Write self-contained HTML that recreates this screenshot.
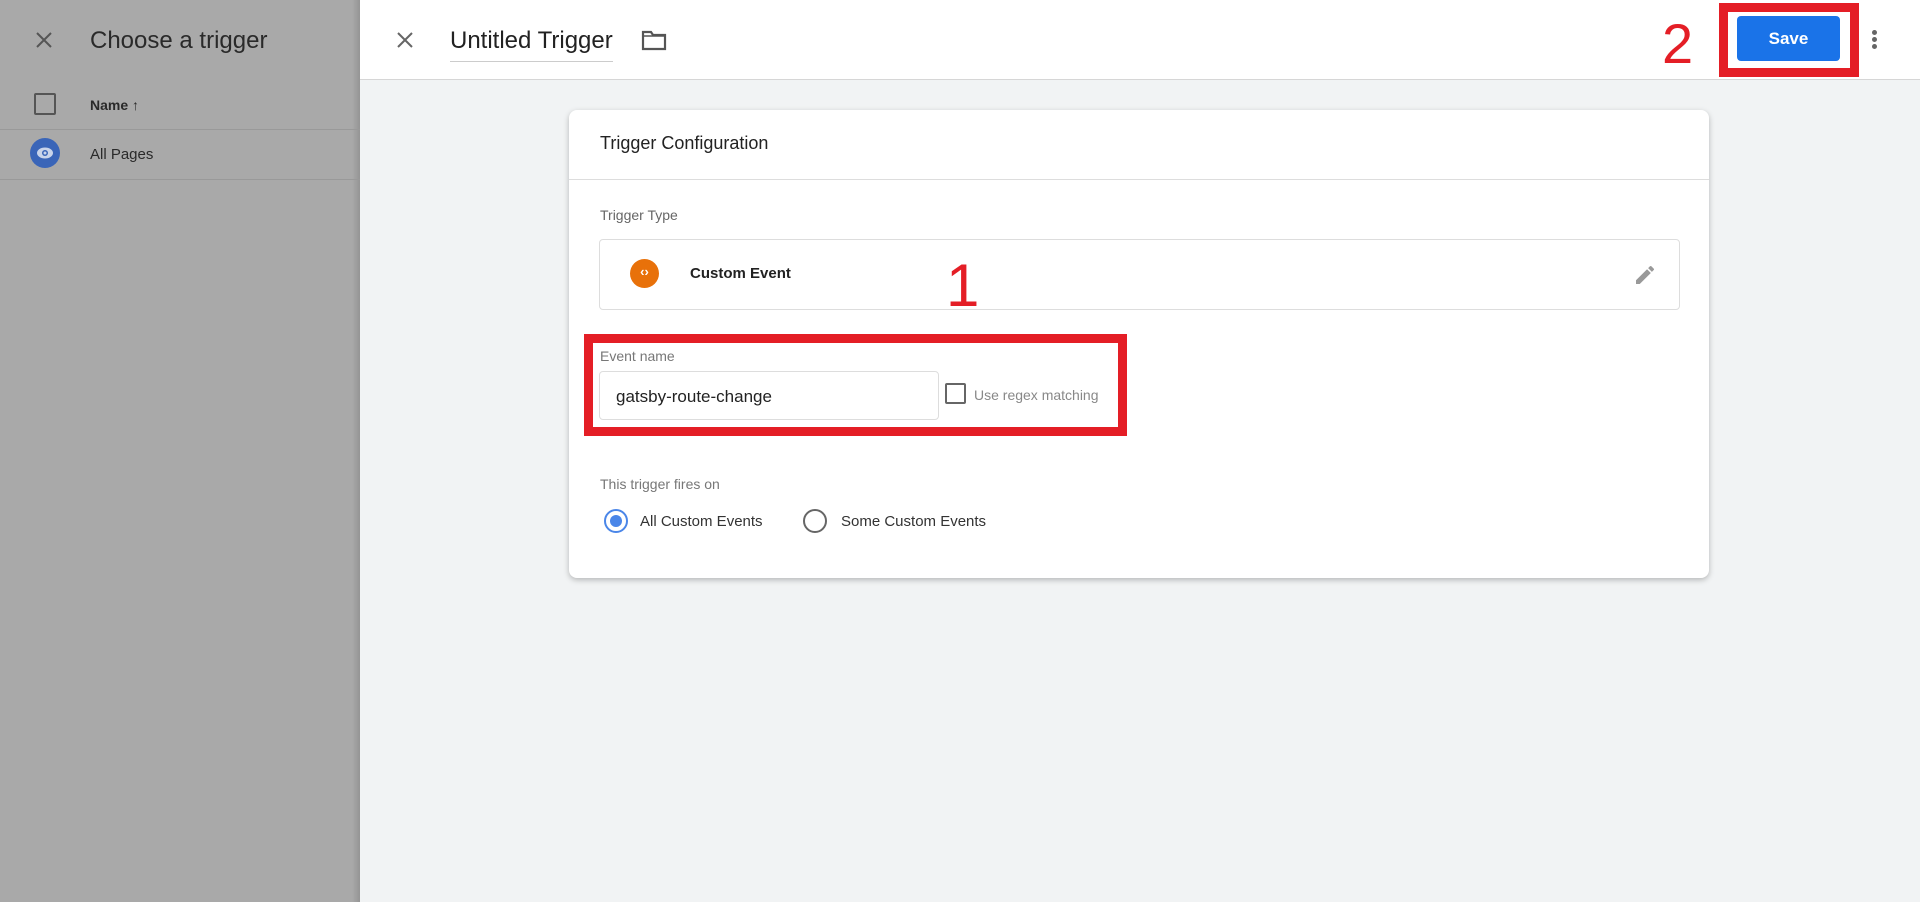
<!DOCTYPE html>
<html><head><style>
*{margin:0;padding:0;box-sizing:border-box}
body{width:1920px;height:902px;overflow:hidden;font-family:"Liberation Sans",sans-serif;background:#f1f3f4;position:relative}
.abs{position:absolute}
#left{left:0;top:0;width:360px;height:902px;background:#a9a9a9}
#hdr{left:360px;top:0;width:1560px;height:80px;background:#fff;border-bottom:1px solid #d6d6d6}
#shadow{left:352px;top:0;width:8px;height:902px;background:linear-gradient(to right,rgba(0,0,0,0),rgba(0,0,0,.12))}
.card{left:569px;top:110px;width:1140px;height:468px;background:#fff;border-radius:8px;box-shadow:0 2px 6px rgba(0,0,0,.25)}
.red{border:9px solid #e41e26}
</style></head><body>
<div id="left" class="abs"></div>
<div id="shadow" class="abs"></div>
<svg class="abs" style="left:34px;top:30px" width="20" height="20" viewBox="0 0 20 20"><path d="M3 3L17 17M17 3L3 17" stroke="#555" stroke-width="2"/></svg>
<div class="abs" style="left:90px;top:27px;font-size:24px;color:#2a2a2a">Choose a trigger</div>
<div class="abs" style="left:34px;top:93px;width:22px;height:22px;border:2px solid #555;border-radius:2px"></div>
<div class="abs" style="left:90px;top:97px;font-size:14px;font-weight:bold;color:#2a2a2a">Name ↑</div>
<div class="abs" style="left:0;top:129px;width:360px;height:1px;background:#999"></div>
<div class="abs" style="left:30px;top:138px;width:30px;height:30px;border-radius:50%;background:#3a65b8"></div>
<svg class="abs" style="left:36px;top:146px" width="18" height="14" viewBox="0 0 18 14"><ellipse cx="9" cy="7" rx="8" ry="5.5" fill="#c9d4ea"/><circle cx="9" cy="7" r="3" fill="#3a65b8"/><circle cx="9" cy="7" r="1.5" fill="#c9d4ea"/></svg>
<div class="abs" style="left:90px;top:146px;font-size:15px;color:#2a2a2a">All Pages</div>
<div class="abs" style="left:0;top:179px;width:360px;height:1px;background:#999"></div>

<div id="hdr" class="abs"></div>
<svg class="abs" style="left:395px;top:30px" width="20" height="20" viewBox="0 0 20 20"><path d="M3 3L17 17M17 3L3 17" stroke="#666" stroke-width="2"/></svg>
<div class="abs" style="left:450px;top:27px;font-size:24px;color:#222;border-bottom:1px solid #ccc;padding-bottom:6px">Untitled Trigger</div>
<svg class="abs" style="left:641px;top:29px" width="26" height="22" viewBox="0 0 26 22"><path d="M2 3h8l2 3h12v14H2z" fill="none" stroke="#555" stroke-width="2.2"/><path d="M2 7h22" stroke="#555" stroke-width="1.5"/></svg>
<div class="abs" style="left:1662px;top:14px;font-size:56px;color:#e41e26;line-height:60px">2</div>
<div class="abs red" style="left:1719px;top:3px;width:140px;height:74px"></div>
<div class="abs" style="left:1737px;top:16px;width:103px;height:45px;background:#1a73e8;border-radius:4px;color:#fff;font-weight:bold;font-size:17px;text-align:center;line-height:45px">Save</div>
<div class="abs" style="left:1872px;top:30px;width:5px;height:5px;border-radius:50%;background:#666"></div>
<div class="abs" style="left:1872px;top:37px;width:5px;height:5px;border-radius:50%;background:#666"></div>
<div class="abs" style="left:1872px;top:44px;width:5px;height:5px;border-radius:50%;background:#666"></div>

<div class="abs card"></div>
<div class="abs" style="left:600px;top:133px;font-size:18px;color:#222">Trigger Configuration</div>
<div class="abs" style="left:569px;top:179px;width:1140px;height:1px;background:#ddd"></div>
<div class="abs" style="left:600px;top:207px;font-size:14px;color:#666">Trigger Type</div>
<div class="abs" style="left:599px;top:239px;width:1081px;height:71px;border:1px solid #ddd;border-radius:4px"></div>
<div class="abs" style="left:630px;top:259px;width:29px;height:29px;border-radius:50%;background:#e8710a"></div>
<div class="abs" style="left:630px;top:264px;width:29px;text-align:center;color:#fff;font-size:13px;font-weight:bold">‹›</div>
<div class="abs" style="left:690px;top:265px;font-size:15px;font-weight:bold;color:#222">Custom Event</div>
<svg class="abs" style="left:1633px;top:263px" width="24" height="24" viewBox="0 0 24 24"><path d="M3 17.25V21h3.75L17.81 9.94l-3.75-3.75L3 17.25zM20.71 7.04a1 1 0 000-1.41l-2.34-2.34a1 1 0 00-1.41 0l-1.83 1.83 3.75 3.75 1.83-1.83z" fill="#999"/></svg>
<div class="abs" style="left:946px;top:254px;font-size:60px;color:#e41e26;line-height:64px">1</div>
<div class="abs red" style="left:584px;top:334px;width:543px;height:102px"></div>
<div class="abs" style="left:600px;top:348px;font-size:14px;color:#777">Event name</div>
<div class="abs" style="left:599px;top:371px;width:340px;height:49px;border:1px solid #ddd;border-radius:4px"></div>
<div class="abs" style="left:616px;top:387px;font-size:17px;color:#222">gatsby-route-change</div>
<div class="abs" style="left:945px;top:383px;width:21px;height:21px;border:2px solid #666;border-radius:2px"></div>
<div class="abs" style="left:974px;top:387px;font-size:14px;color:#888">Use regex matching</div>
<div class="abs" style="left:600px;top:476px;font-size:14px;color:#777">This trigger fires on</div>
<div class="abs" style="left:604px;top:509px;width:24px;height:24px;border:2px solid #4a86e8;border-radius:50%"></div>
<div class="abs" style="left:610px;top:515px;width:12px;height:12px;background:#4a86e8;border-radius:50%"></div>
<div class="abs" style="left:640px;top:513px;font-size:15px;color:#333">All Custom Events</div>
<div class="abs" style="left:803px;top:509px;width:24px;height:24px;border:2px solid #666;border-radius:50%"></div>
<div class="abs" style="left:841px;top:513px;font-size:15px;color:#333">Some Custom Events</div>
</body></html>
